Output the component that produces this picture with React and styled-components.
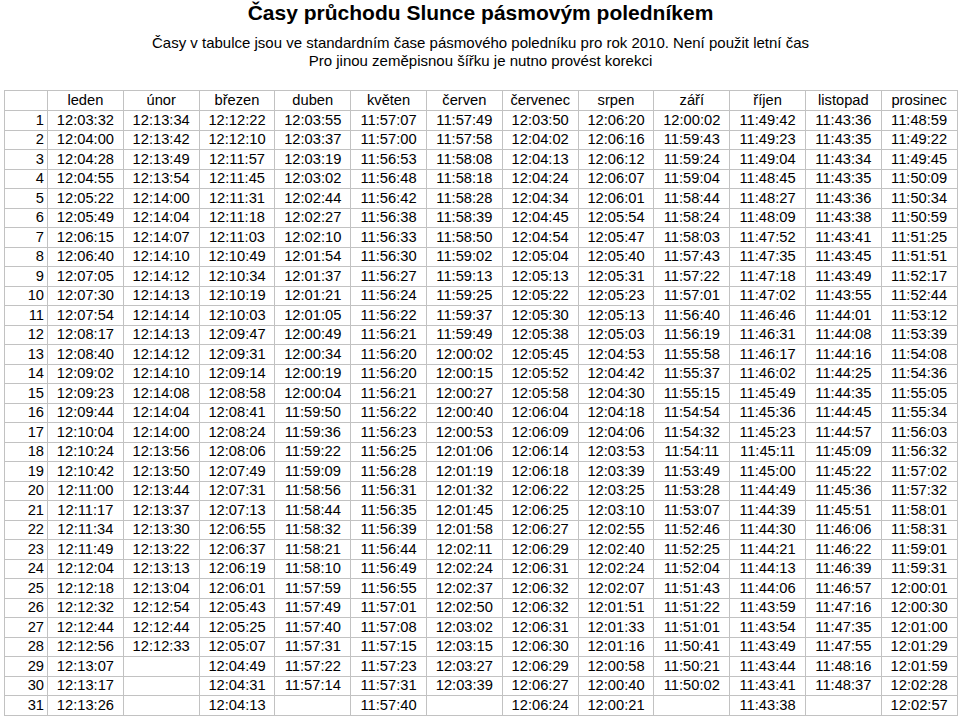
import React from 'react';
import styled, {createGlobalStyle} from 'styled-components';

const GlobalStyle = createGlobalStyle`
  html, body {
    margin: 0;
    padding: 0;
    background: #fff;
  }
  body {
    font-family: "Liberation Sans", Arial, sans-serif;
    color: #000;
  }
`;

const Page = styled.div`
  width: 960px;
  padding: 0 3px 0 4px;
  box-sizing: border-box;
`;

const Header = styled.div`
  text-align: center;
`;

const Title = styled.h1`
  margin: 0;
  font-size: 21px;
  line-height: 26px;
  font-weight: bold;
`;

const Note = styled.p`
  margin: 0;
  font-size: 15px;
  line-height: 18px;
  &:first-of-type {
    margin-top: 8px;
  }
`;

const Table = styled.table`
  margin-top: 20px;
  width: 953px;
  border-collapse: collapse;
  table-layout: fixed;
  font-size: 14.7px;
`;

const Col = styled.col`
  width: ${p => p.$w}px;
`;

const Row = styled.tr`
  height: ${p => (p.$head ? 20 : 19.5)}px;
`;

const Cell = styled.td`
  border: 1px solid #c2c2c2;
  padding: 0;
  line-height: 17px;
  text-align: ${p => (p.$num ? 'right' : 'center')};
  padding-right: ${p => (p.$num ? '3px' : '0')};
  white-space: nowrap;
  overflow: hidden;
`;

const months = ['leden', 'únor', 'březen', 'duben', 'květen', 'červen', 'červenec', 'srpen', 'září', 'říjen', 'listopad', 'prosinec'];

const data = `12:03:32 12:13:34 12:12:22 12:03:55 11:57:07 11:57:49 12:03:50 12:06:20 12:00:02 11:49:42 11:43:36 11:48:59
12:04:00 12:13:42 12:12:10 12:03:37 11:57:00 11:57:58 12:04:02 12:06:16 11:59:43 11:49:23 11:43:35 11:49:22
12:04:28 12:13:49 12:11:57 12:03:19 11:56:53 11:58:08 12:04:13 12:06:12 11:59:24 11:49:04 11:43:34 11:49:45
12:04:55 12:13:54 12:11:45 12:03:02 11:56:48 11:58:18 12:04:24 12:06:07 11:59:04 11:48:45 11:43:35 11:50:09
12:05:22 12:14:00 12:11:31 12:02:44 11:56:42 11:58:28 12:04:34 12:06:01 11:58:44 11:48:27 11:43:36 11:50:34
12:05:49 12:14:04 12:11:18 12:02:27 11:56:38 11:58:39 12:04:45 12:05:54 11:58:24 11:48:09 11:43:38 11:50:59
12:06:15 12:14:07 12:11:03 12:02:10 11:56:33 11:58:50 12:04:54 12:05:47 11:58:03 11:47:52 11:43:41 11:51:25
12:06:40 12:14:10 12:10:49 12:01:54 11:56:30 11:59:02 12:05:04 12:05:40 11:57:43 11:47:35 11:43:45 11:51:51
12:07:05 12:14:12 12:10:34 12:01:37 11:56:27 11:59:13 12:05:13 12:05:31 11:57:22 11:47:18 11:43:49 11:52:17
12:07:30 12:14:13 12:10:19 12:01:21 11:56:24 11:59:25 12:05:22 12:05:23 11:57:01 11:47:02 11:43:55 11:52:44
12:07:54 12:14:14 12:10:03 12:01:05 11:56:22 11:59:37 12:05:30 12:05:13 11:56:40 11:46:46 11:44:01 11:53:12
12:08:17 12:14:13 12:09:47 12:00:49 11:56:21 11:59:49 12:05:38 12:05:03 11:56:19 11:46:31 11:44:08 11:53:39
12:08:40 12:14:12 12:09:31 12:00:34 11:56:20 12:00:02 12:05:45 12:04:53 11:55:58 11:46:17 11:44:16 11:54:08
12:09:02 12:14:10 12:09:14 12:00:19 11:56:20 12:00:15 12:05:52 12:04:42 11:55:37 11:46:02 11:44:25 11:54:36
12:09:23 12:14:08 12:08:58 12:00:04 11:56:21 12:00:27 12:05:58 12:04:30 11:55:15 11:45:49 11:44:35 11:55:05
12:09:44 12:14:04 12:08:41 11:59:50 11:56:22 12:00:40 12:06:04 12:04:18 11:54:54 11:45:36 11:44:45 11:55:34
12:10:04 12:14:00 12:08:24 11:59:36 11:56:23 12:00:53 12:06:09 12:04:06 11:54:32 11:45:23 11:44:57 11:56:03
12:10:24 12:13:56 12:08:06 11:59:22 11:56:25 12:01:06 12:06:14 12:03:53 11:54:11 11:45:11 11:45:09 11:56:32
12:10:42 12:13:50 12:07:49 11:59:09 11:56:28 12:01:19 12:06:18 12:03:39 11:53:49 11:45:00 11:45:22 11:57:02
12:11:00 12:13:44 12:07:31 11:58:56 11:56:31 12:01:32 12:06:22 12:03:25 11:53:28 11:44:49 11:45:36 11:57:32
12:11:17 12:13:37 12:07:13 11:58:44 11:56:35 12:01:45 12:06:25 12:03:10 11:53:07 11:44:39 11:45:51 11:58:01
12:11:34 12:13:30 12:06:55 11:58:32 11:56:39 12:01:58 12:06:27 12:02:55 11:52:46 11:44:30 11:46:06 11:58:31
12:11:49 12:13:22 12:06:37 11:58:21 11:56:44 12:02:11 12:06:29 12:02:40 11:52:25 11:44:21 11:46:22 11:59:01
12:12:04 12:13:13 12:06:19 11:58:10 11:56:49 12:02:24 12:06:31 12:02:24 11:52:04 11:44:13 11:46:39 11:59:31
12:12:18 12:13:04 12:06:01 11:57:59 11:56:55 12:02:37 12:06:32 12:02:07 11:51:43 11:44:06 11:46:57 12:00:01
12:12:32 12:12:54 12:05:43 11:57:49 11:57:01 12:02:50 12:06:32 12:01:51 11:51:22 11:43:59 11:47:16 12:00:30
12:12:44 12:12:44 12:05:25 11:57:40 11:57:08 12:03:02 12:06:31 12:01:33 11:51:01 11:43:54 11:47:35 12:01:00
12:12:56 12:12:33 12:05:07 11:57:31 11:57:15 12:03:15 12:06:30 12:01:16 11:50:41 11:43:49 11:47:55 12:01:29
12:13:07 - 12:04:49 11:57:22 11:57:23 12:03:27 12:06:29 12:00:58 11:50:21 11:43:44 11:48:16 12:01:59
12:13:17 - 12:04:31 11:57:14 11:57:31 12:03:39 12:06:27 12:00:40 11:50:02 11:43:41 11:48:37 12:02:28
12:13:26 - 12:04:13 - 11:57:40 - 12:06:24 12:00:21 - 11:43:38 - 12:02:57`
  .split('\n')
  .map(line => line.split(' ').map(v => (v === '-' ? '' : v)));

export default function App() {
    return (
        <Page>
            <GlobalStyle />
            <Header>
                <Title>Časy průchodu Slunce pásmovým poledníkem</Title>
                <Note>Časy v tabulce jsou ve standardním čase pásmového poledníku pro rok 2010. Není použit letní čas</Note>
                <Note>Pro jinou zeměpisnou šířku je nutno provést korekci</Note>
            </Header>
            <Table>
                <colgroup>
                    <Col $w={43} />
                    {months.map(m => <Col key={m} $w={75.8} />)}
                </colgroup>
                <tbody>
                    <Row $head>
                        <Cell />
                        {months.map(m => <Cell key={m}>{m}</Cell>)}
                    </Row>
                    {data.map((row, i) => (
                        <Row key={i}>
                            <Cell $num>{i + 1}</Cell>
                            {row.map((v, j) => <Cell key={j}>{v}</Cell>)}
                        </Row>
                    ))}
                </tbody>
            </Table>
        </Page>
    );
}
